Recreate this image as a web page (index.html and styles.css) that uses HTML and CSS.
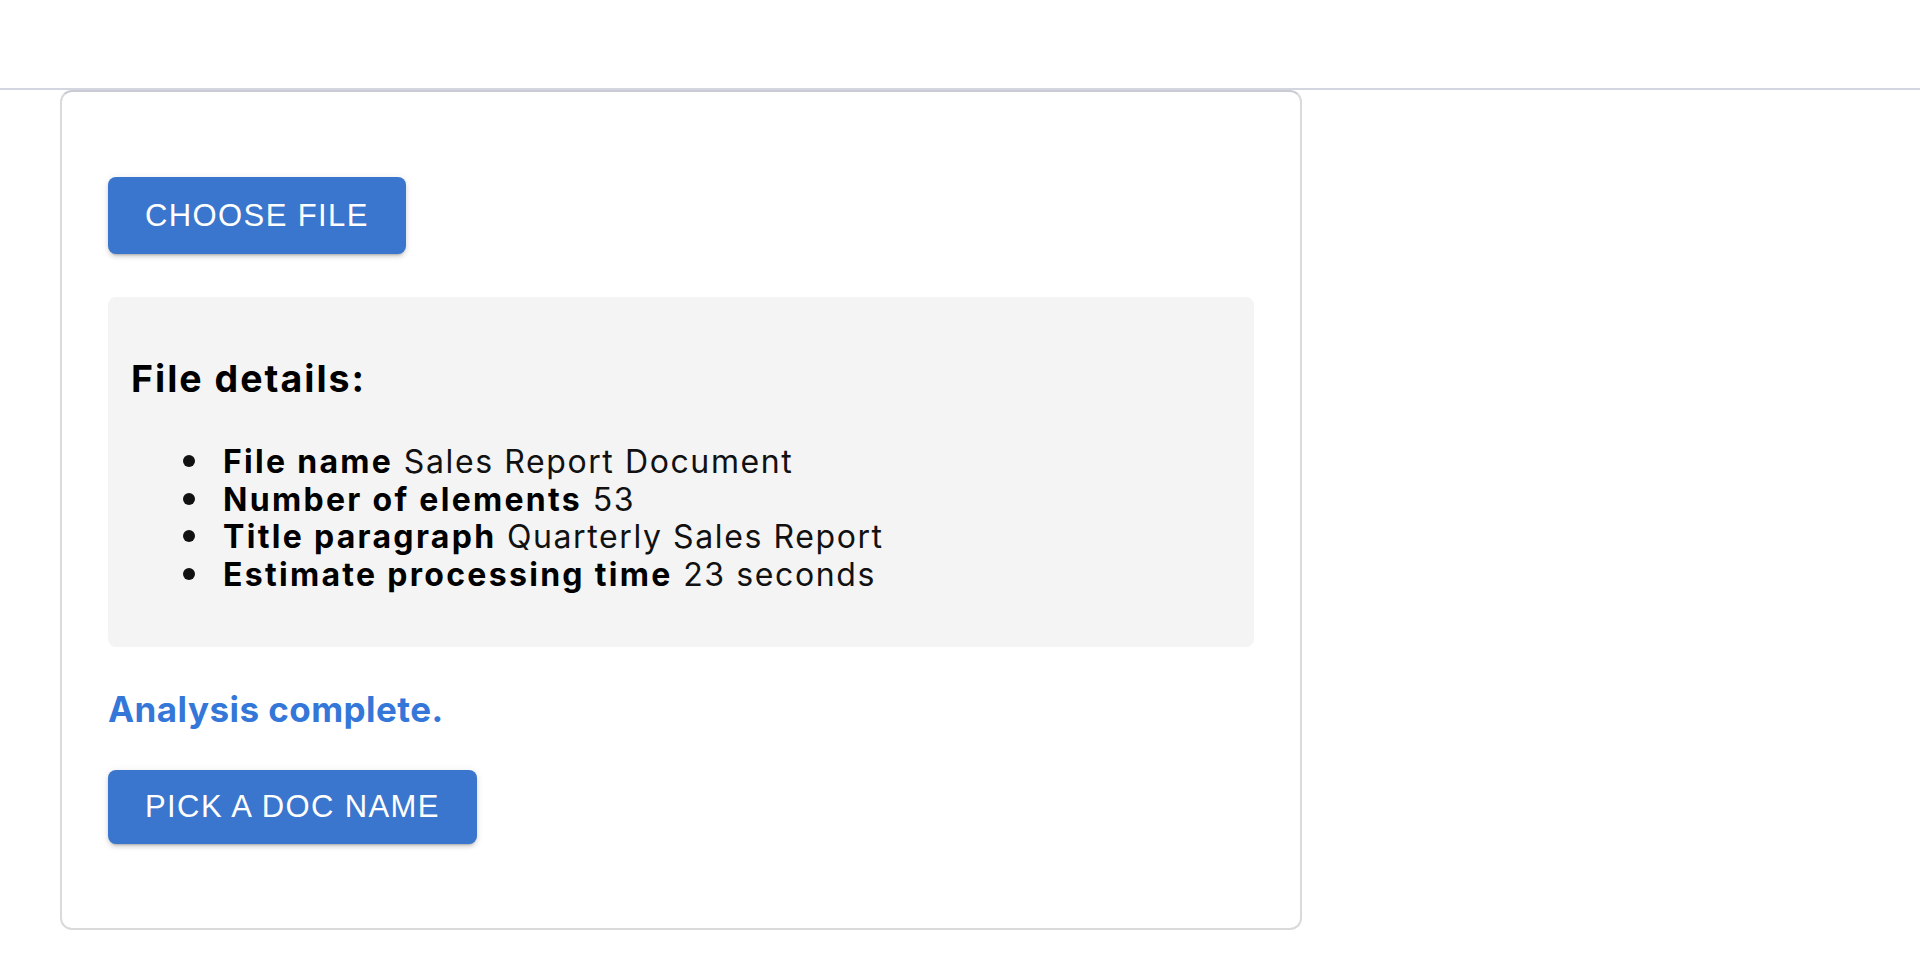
FILE: index.html
```html
<!DOCTYPE html>
<html lang="en">
<head>
<meta charset="utf-8">
<title>File analysis</title>
<link rel="stylesheet" href="styles.css">
</head>
<body>
<header class="topbar"></header>
<main class="card">
  <button class="btn btn-choose" type="button">Choose file</button>
  <section class="details">
    <h3 class="details-title">File details:</h3>
    <ul class="details-list">
      <li><strong>File name</strong> Sales Report Document</li>
      <li><strong>Number of elements</strong> 53</li>
      <li><strong>Title paragraph</strong> Quarterly Sales Report</li>
      <li><strong>Estimate processing time</strong> 23 seconds</li>
    </ul>
  </section>
  <p class="status">Analysis complete.</p>
  <button class="btn btn-pick" type="button">Pick a doc name</button>
</main>
</body>
</html>
```

FILE: styles.css
```css
* { box-sizing: border-box; }

html, body {
  margin: 0;
  padding: 0;
  background: #ffffff;
}

body {
  font-family: Inter, "Noto Sans", sans-serif;
  color: #111111;
  width: 1920px;
  height: 960px;
  overflow: hidden;
}

.topbar {
  height: 90px;
  background: #ffffff;
  border-bottom: 2px solid #d3d5df;
}

.card {
  margin-left: 60px;
  width: 1242px;
  border: 2px solid #dadada;
  border-top-color: #c9cbd4;
  border-radius: 12px;
  padding: 85px 46px 84px 46px;
  display: flex;
  flex-direction: column;
  align-items: flex-start;
}

.btn {
  font-family: "Liberation Sans", Arial, sans-serif;
  font-size: 31px;
  letter-spacing: 1.4px;
  text-transform: uppercase;
  color: #ffffff;
  background: #3a76cd;
  border: none;
  border-radius: 8px;
  padding: 0 37px;
  display: inline-flex;
  align-items: center;
  justify-content: center;
  box-shadow: 0 4px 2px -3px rgba(0,0,0,0.2), 0 3px 4px rgba(0,0,0,0.12), 0 1px 8px rgba(0,0,0,0.08);
  cursor: pointer;
}

.btn-choose {
  height: 77px;
  margin-bottom: 43px;
}

.btn-pick {
  height: 74px;
}

.details {
  align-self: stretch;
  background: #f4f4f4;
  border-radius: 8px;
  padding: 59px 23px 54px 23px;
  margin-bottom: 41px;
}

.details-title {
  margin: 0;
  font-size: 37.5px;
  line-height: 45px;
  font-weight: 700;
  letter-spacing: 2px;
  color: #000000;
}

.details-list {
  list-style: none;
  margin: 42px 0 0 0;
  padding: 0 0 0 92px;
  font-size: 32px;
  line-height: 37.6px;
  letter-spacing: 1.6px;
}

.details-list li::before {
  content: "";
  display: inline-block;
  width: 12px;
  height: 12px;
  border-radius: 50%;
  background: #111111;
  margin-left: -40px;
  margin-right: 28px;
  vertical-align: 6px;
}

.details-list strong {
  font-weight: 700;
  letter-spacing: 2.3px;
  color: #000000;
}

.status {
  margin: 0 0 40px 0;
  font-size: 35px;
  line-height: 42px;
  font-weight: 700;
  letter-spacing: 0.45px;
  color: #3577d8;
}
```
